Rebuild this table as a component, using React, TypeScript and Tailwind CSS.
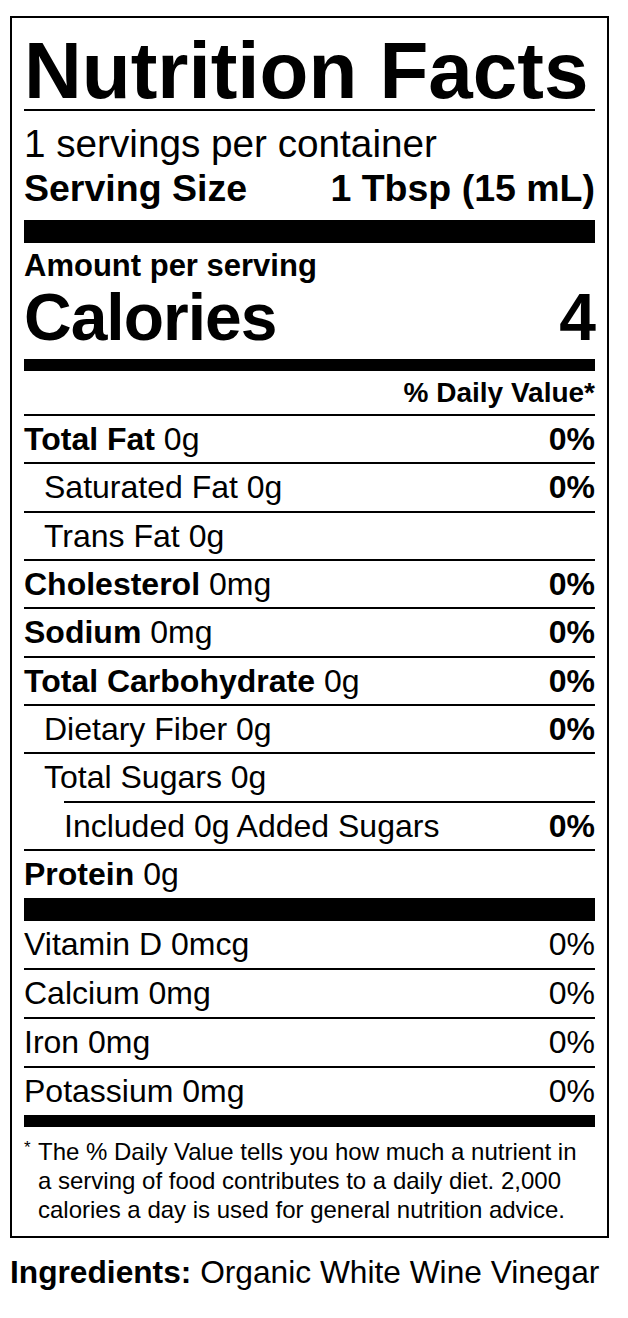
import React from "react";

type Row = {
  label: string;
  amount: string;
  dv?: string;
  bold?: boolean;
  indent?: 0 | 1 | 2;
  lineIndent?: boolean;
};

const nutrients: Row[] = [
  { label: "Total Fat", amount: "0g", dv: "0%", bold: true },
  { label: "Saturated Fat", amount: "0g", dv: "0%", indent: 1 },
  { label: "Trans Fat", amount: "0g", indent: 1 },
  { label: "Cholesterol", amount: "0mg", dv: "0%", bold: true },
  { label: "Sodium", amount: "0mg", dv: "0%", bold: true },
  { label: "Total Carbohydrate", amount: "0g", dv: "0%", bold: true },
  { label: "Dietary Fiber", amount: "0g", dv: "0%", indent: 1 },
  { label: "Total Sugars", amount: "0g", indent: 1, lineIndent: true },
  { label: "Included 0g Added Sugars", amount: "", dv: "0%", indent: 2 },
];

const vitamins = [
  { label: "Vitamin D 0mcg", dv: "0%" },
  { label: "Calcium 0mg", dv: "0%" },
  { label: "Iron 0mg", dv: "0%" },
  { label: "Potassium 0mg", dv: "0%" },
];

function NutrientRow({ row }: { row: Row }) {
  const pad = row.indent === 2 ? "pl-[40px]" : row.indent === 1 ? "pl-[20px]" : "";
  return (
    <>
      <div className={`flex h-[46.33px] items-center justify-between text-[32px] leading-none ${pad}`}>
        <span>
          {row.bold ? <span className="font-bold">{row.label}</span> : row.label}
          {row.amount && <> {row.amount}</>}
        </span>
        {row.dv && <span className="font-bold">{row.dv}</span>}
      </div>
      <div className={`h-[2px] bg-black ${row.lineIndent ? "ml-[40px]" : ""}`} />
    </>
  );
}

export default function App() {
  return (
    <div className="min-h-screen bg-white pl-[10px] pt-[16px] font-['Liberation_Sans',Arial,sans-serif] text-black">
      <div className="w-[599px] border-2 border-black px-[12px]">
        <div className="flex h-[91px] items-center pt-[15px] text-[80px] font-bold leading-none">
          Nutrition Facts
        </div>
        <div className="h-[2px] bg-black" />

        <div className="mt-[10px] flex h-[46px] items-center text-[38.7px] leading-none">
          1 servings per container
        </div>
        <div className="flex h-[44px] items-center justify-between text-[37.5px] font-bold leading-none">
          <span>Serving Size</span>
          <span>1 Tbsp (15 mL)</span>
        </div>
        <div className="mt-[9px] h-[23px] bg-black" />

        <div className="flex h-[44px] items-center text-[31px] font-bold leading-none">
          Amount per serving
        </div>
        <div className="flex h-[60px] items-center justify-between text-[66px] font-bold leading-none tracking-[-1px]">
          <span>Calories</span>
          <span>4</span>
        </div>
        <div className="mt-[12px] h-[12px] bg-black" />

        <div className="flex h-[43px] items-center justify-end text-[28px] font-bold leading-none">
          % Daily Value*
        </div>
        <div className="h-[2px] bg-black" />

        {nutrients.map((r) => (
          <NutrientRow key={r.label} row={r} />
        ))}

        <div className="flex h-[47px] items-center text-[32px] leading-none">
          <span>
            <span className="font-bold">Protein</span> 0g
          </span>
        </div>
        <div className="h-[23px] bg-black" />

        {vitamins.map((v, i) => (
          <div key={v.label}>
            <div className="flex h-[47px] items-center justify-between text-[32px] leading-none">
              <span>{v.label}</span>
              <span>{v.dv}</span>
            </div>
            {i < vitamins.length - 1 && <div className="h-[2px] bg-black" />}
          </div>
        ))}
        <div className="h-[12px] bg-black" />

        <div className="flex pb-[12px] pt-[10px] text-[24px] leading-[29px]">
          <span className="w-[14px] shrink-0 text-[17px] leading-[22px]">*</span>
          <p className="w-[550px]">
            The % Daily Value tells you how much a nutrient in a serving of food
            contributes to a daily diet. 2,000 calories a day is used for general
            nutrition advice.
          </p>
        </div>
      </div>

      <div className="flex h-[70px] items-center text-[31.7px] leading-none">
        <span>
          <span className="font-bold">Ingredients:</span> Organic White Wine Vinegar
        </span>
      </div>
    </div>
  );
}
